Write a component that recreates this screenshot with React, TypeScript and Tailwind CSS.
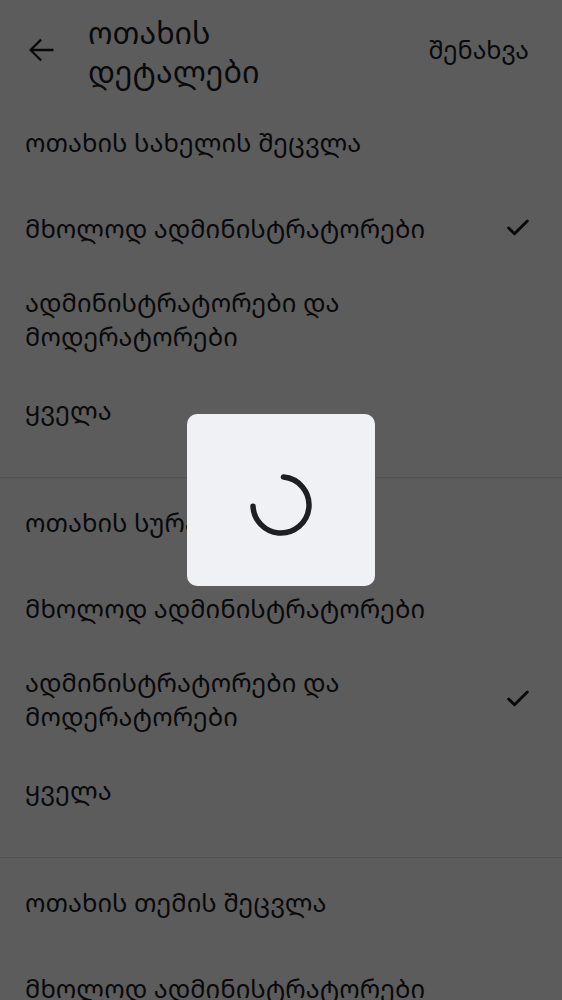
import { Check } from 'lucide-react';

const font = { fontFamily: '"Noto Sans Georgian", "Noto Sans", "DejaVu Sans", sans-serif' };

type Option = { label: string; checked?: boolean };

const sections: { title: string; options: Option[] }[] = [
  {
    title: 'ოთახის სახელის შეცვლა',
    options: [
      { label: 'მხოლოდ ადმინისტრატორები', checked: true },
      { label: 'ადმინისტრატორები და მოდერატორები' },
      { label: 'ყველა' },
    ],
  },
  {
    title: 'ოთახის სურათის შეცვლა',
    options: [
      { label: 'მხოლოდ ადმინისტრატორები' },
      { label: 'ადმინისტრატორები და მოდერატორები', checked: true },
      { label: 'ყველა' },
    ],
  },
  {
    title: 'ოთახის თემის შეცვლა',
    options: [
      { label: 'მხოლოდ ადმინისტრატორები' },
      { label: 'ადმინისტრატორები და მოდერატორები' },
      { label: 'ყველა', checked: true },
    ],
  },
];

function BackArrow() {
  return (
    <svg width="34" height="34" viewBox="0 0 24 24" fill="none" stroke="currentColor" strokeWidth="1.6" strokeLinecap="square">
      <path d="M20 12H5 M11.5 5.2L4.7 12l6.8 6.8" />
    </svg>
  );
}

function Spinner() {
  return (
    <svg width="64" height="64" viewBox="0 0 64 64">
      <circle
        cx="32"
        cy="32"
        r="28"
        fill="none"
        stroke="#1f1f23"
        strokeWidth="5.5"
        strokeLinecap="round"
        strokeDasharray="128 200"
        transform="rotate(-85 32 32)"
      />
    </svg>
  );
}

export default function App() {
  return (
    <div className="relative h-[1000px] w-[562px] overflow-hidden bg-white text-[#1b1b1f]" style={font}>
      {/* Top bar */}
      <div className="flex items-start pt-[13px] pb-[34px]">
        <div className="flex h-[74px] w-[88px] items-center pl-[24px]">
          <BackArrow />
        </div>
        <h1 className="flex-1 text-[30.5px] leading-[39px] font-normal">
          ოთახის
          <br />
          დეტალები
        </h1>
        <div className="flex h-[74px] items-center pr-[33px] text-[25px]">შენახვა</div>
      </div>

      {sections.map((s, i) => (
        <div key={i} className={i > 0 ? 'border-t border-[#e2e2e6]' : ''}>
          <div
            className={`px-[25px] text-[25.5px] leading-[34px] ${i === 0 ? 'pt-0 pb-[32px]' : 'pt-[27px] pb-[32px]'}`}
          >
            {s.title}
          </div>
          {s.options.map((o, j) => (
            <div key={j} className="flex items-center justify-between py-[20px] pl-[25px] pr-[30px]">
              <span className="max-w-[420px] text-[25.5px] leading-[34px]">{o.label}</span>
              {o.checked && <Check size={28} strokeWidth={2.5} />}
            </div>
          ))}
          <div className="h-[30px]" />
        </div>
      ))}

      {/* Loading overlay */}
      <div className="absolute inset-0 flex items-center justify-center bg-black/[0.64]">
        <div className="flex h-[172px] w-[188px] items-center justify-center rounded-[10px] bg-[#f0f1f5] pt-[10px]">
          <Spinner />
        </div>
      </div>
    </div>
  );
}
